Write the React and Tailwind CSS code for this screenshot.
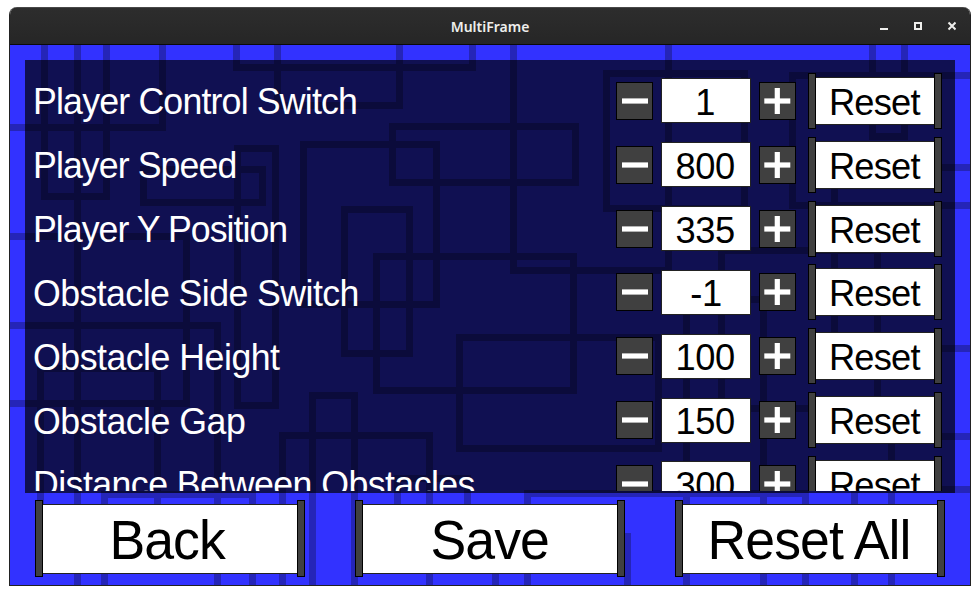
import React from "react";

const SETTINGS = [
  { label: "Player Control Switch", value: "1", tracking: "tracking-[-0.85px]" },
  { label: "Player Speed", value: "800", tracking: "tracking-[-0.95px]" },
  { label: "Player Y Position", value: "335", tracking: "tracking-[-1px]" },
  { label: "Obstacle Side Switch", value: "-1", tracking: "tracking-[-0.6px]" },
  { label: "Obstacle Height", value: "100", tracking: "tracking-[-0.52px]" },
  { label: "Obstacle Gap", value: "150", tracking: "tracking-[-0.52px]" },
  { label: "Distance Between Obstacles", value: "300", tracking: "tracking-[-0.58px]" },
];

const ACTIONS = [
  { name: "Back", pad: "pr-[5px]" },
  { name: "Save", pad: "pr-0" },
  { name: "Reset All", pad: "pr-[2px]" },
];

// Outlined boxes of the backdrop: left, top, right, bottom in window pixels.
const BOXES = [
  [-20, -20, 166, 131], [41, -20, 110, 200], [74, -20, 1200, 900], [233, -20, 476, 71],
  [274, -20, 403, 109], [510, -20, 672, 274], [389, 123, 579, 186], [300, 141, 440, 308],
  [234, 145, 279, 409], [140, 166, 266, 206], [-20, 233, 190, 407], [-20, 322, 221, 900],
  [37, 365, 161, 530], [101, 491, 256, 900], [309, 392, 358, 900], [279, 432, 433, 900],
  [341, 206, 413, 357], [373, 253, 577, 394], [456, 334, 662, 452], [394, 475, 471, 530],
  [524, 490, 809, 900], [492, 533, 631, 900], [718, 247, 881, 412], [831, 164, 1200, 352],
  [789, 72, 1200, 209], [869, -20, 908, 140], [603, 70, 748, 212], [683, 296, 767, 900],
  [888, 433, 1200, 900], [851, 486, 1200, 900],
];

function Backdrop() {
  return (
    <svg className="absolute inset-0 h-full w-full" viewBox="10 45 960 540" fill="none" stroke="#2525b8" strokeWidth="7.4" shapeRendering="crispEdges">
      {BOXES.map(([l, t, r, b]) => (
        <rect key={`${l}-${t}`} x={l + 3.7} y={t + 3.7} width={r - l - 7.4} height={b - t - 7.4} />
      ))}
    </svg>
  );
}

function StepButton({ plus }) {
  return (
    <button className="h-[38px] w-[37px] shrink-0 border border-black bg-[#404040]">
      <svg className="h-full w-full" viewBox="0 0 35 36" fill="#fff">
        <rect x={plus ? 4.3 : 5} y="15.4" width="26" height="5.2" />
        {plus && <rect x="14.7" y="5" width="5.2" height="26" />}
      </svg>
    </button>
  );
}

function PostButton({ className, bodyClass, textClass, children }) {
  return (
    <button className={`flex shrink-0 items-center text-black ${className}`}>
      <span className="z-10 h-full w-2 shrink-0 border border-black bg-[#404040]" />
      <span className={`flex min-w-0 flex-1 items-center justify-center border-y border-[#222] bg-white whitespace-nowrap ${bodyClass}`}>
        <span className={textClass}>{children}</span>
      </span>
      <span className="z-10 h-full w-2 shrink-0 border border-black bg-[#404040]" />
    </button>
  );
}

function SettingRow({ label, value, tracking }) {
  return (
    <div className="flex h-[63.83px] shrink-0 items-center pl-[7px] text-[37px] leading-none">
      <div className="w-[584px] shrink-0 pt-[2px] pl-[0.5px] text-white">
        <span className={`block origin-left scale-x-[0.965] whitespace-nowrap ${tracking}`}>{label}</span>
      </div>
      <StepButton />
      <div className="ml-2 flex h-[45px] w-[90px] shrink-0 items-center justify-center border border-[#222] bg-white pt-[3px] pr-[1px] text-black">
        <span className="scale-x-[0.98] tracking-[-0.5px]">{value}</span>
      </div>
      <div className="ml-2 flex">
        <StepButton plus />
      </div>
      <PostButton className="ml-[12px] h-14 w-[134px]" bodyClass="h-12 pt-[3px] pr-[2px]" textClass="scale-x-[0.98] tracking-[-0.8px]">
        Reset
      </PostButton>
    </div>
  );
}

export default function App() {
  return (
    <div className="h-[595px] w-[980px] overflow-hidden bg-white pt-[7px] pl-[9px] font-['Liberation_Sans',Arial,sans-serif]">
      <div className="flex h-[579px] w-[962px] flex-col overflow-hidden rounded-t-[8px] border-x border-b border-[#222]">
        <header className="flex h-[38px] shrink-0 items-center border-t border-b border-t-[#484848] border-b-[#0a0a0a] bg-linear-to-b from-[#2d2d2d] to-[#262626]">
          <div className="w-[100px]" />
          <h1 className="flex-1 pt-[2px] text-center font-['Noto_Sans','Open_Sans',sans-serif] text-[14px] leading-none font-semibold text-[#eeeeec]">MultiFrame</h1>
          <div className="flex w-[100px] justify-end pr-[14px]">
            <svg className="h-3 w-[76px]" viewBox="0 0 76 12" fill="none" stroke="#eeeeec" strokeWidth="2">
              <path d="M0 9h8M35 3h6v6h-6z" />
              <path d="M68.5 2.5l7 7M75.5 2.5l-7 7" />
            </svg>
          </div>
        </header>
        <main className="relative h-[540px] shrink-0 overflow-hidden bg-[#3232ff]">
          <Backdrop />
          <div className="relative flex h-full flex-col pt-[15px]">
            <section className="mx-[15px] h-[433px] shrink-0 bg-black/68 pb-[2px]">
              <div className="flex h-full flex-col overflow-hidden pt-[9px]">
                {SETTINGS.map((s) => (
                  <SettingRow key={s.label} {...s} />
                ))}
              </div>
            </section>
            <footer className="flex gap-[50px] pt-[7px] pl-[25px] text-[55px] leading-none">
              {ACTIONS.map(({ name, pad }) => (
                <PostButton key={name} className="h-[77px] w-[270px]" bodyClass={`h-[70px] pt-[4px] ${pad}`} textClass="scale-x-[0.975] tracking-[-1px]">
                  {name}
                </PostButton>
              ))}
            </footer>
          </div>
        </main>
      </div>
    </div>
  );
}
